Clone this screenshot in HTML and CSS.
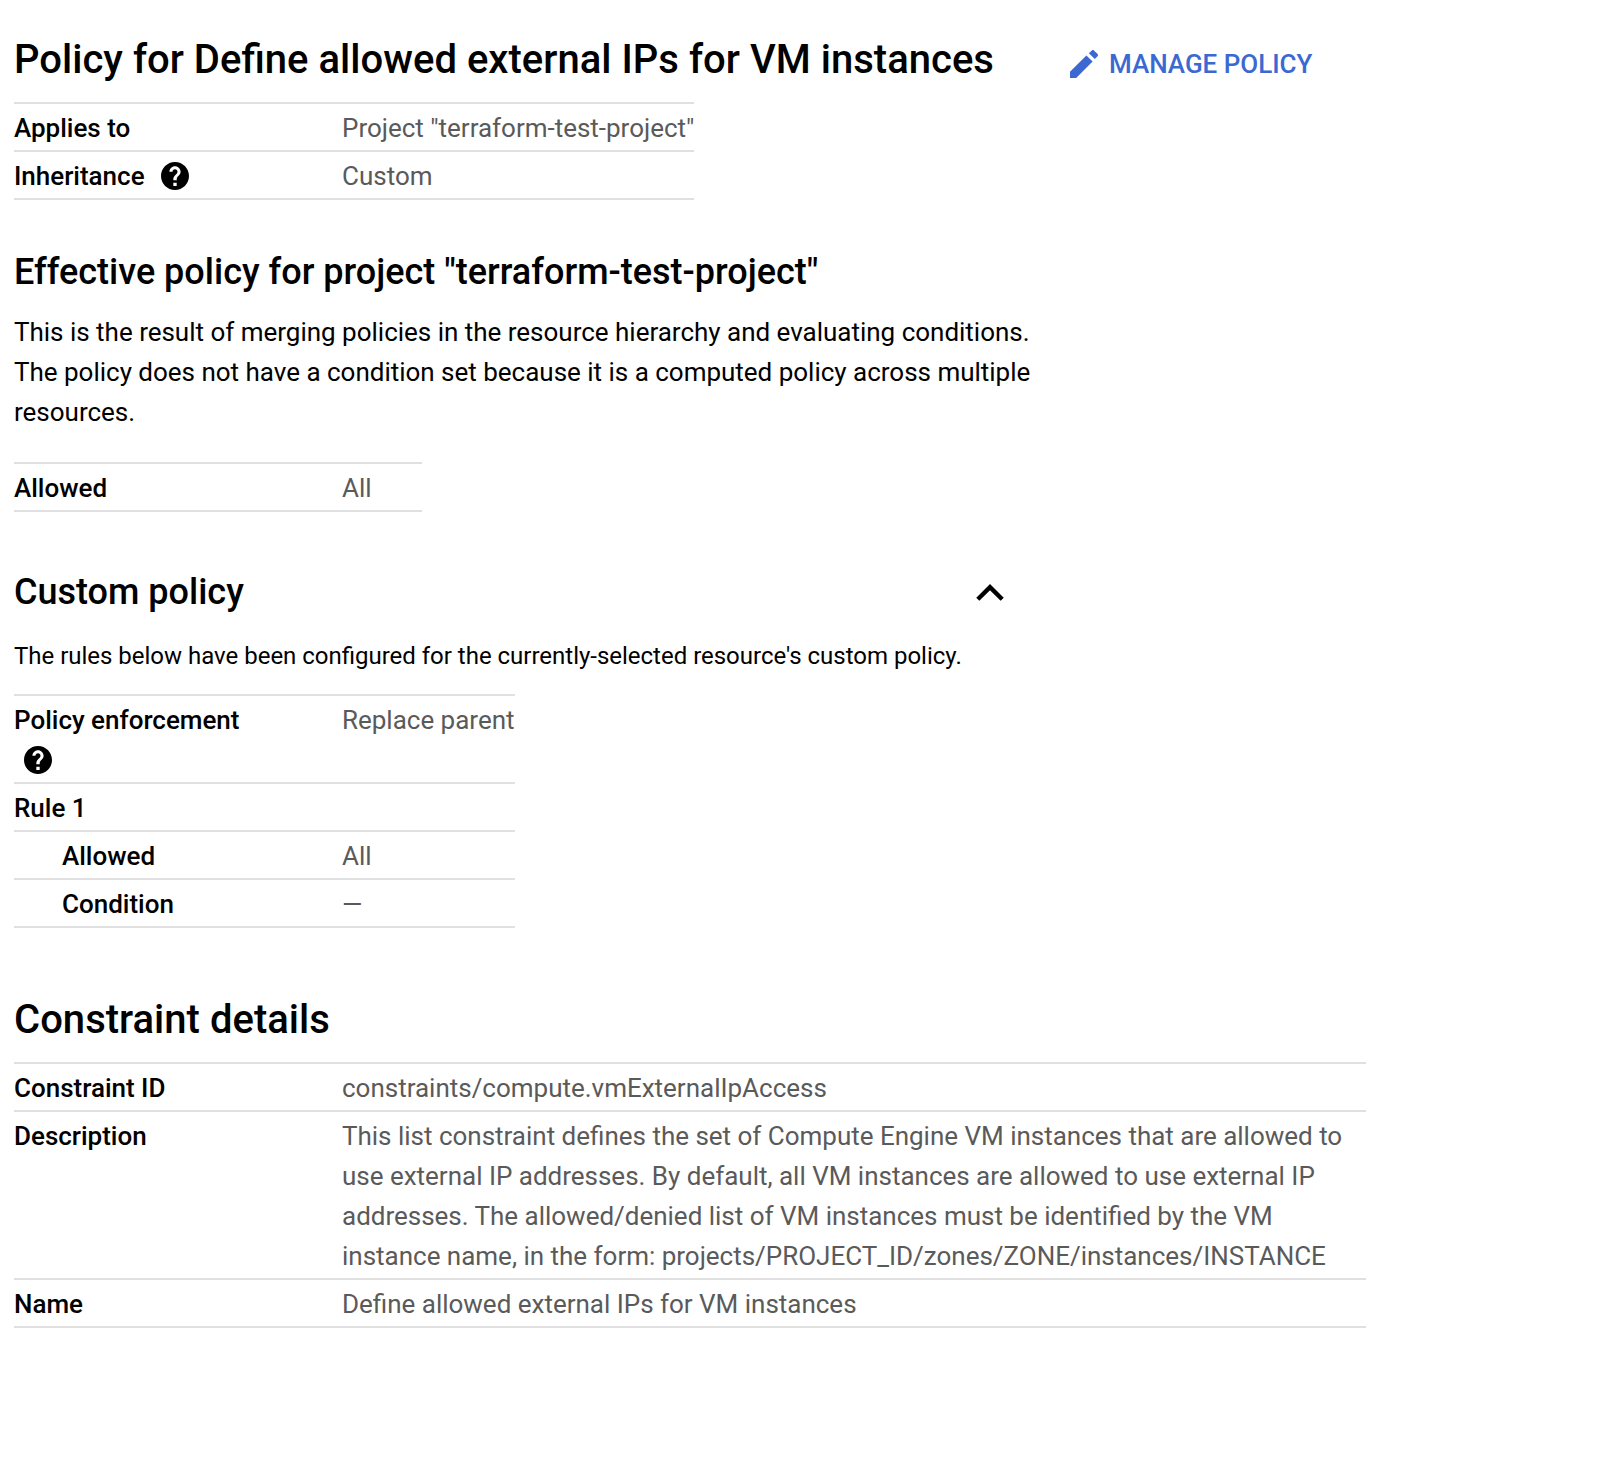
FILE: index.html
```html
<!DOCTYPE html>
<html lang="en">
<head>
<meta charset="utf-8">
<title>Organization policy details</title>
<link rel="stylesheet" href="styles.css">
</head>
<body>
<svg class="sprite" aria-hidden="true">
  <symbol id="help" viewBox="2 2 20 20">
    <path d="M12 2C6.480 2 2 6.480 2 12s4.480 10 10 10 10-4.480 10-10S17.520 2 12 2zm1.200 17.200h-2.400v-2.400h2.400v2.400zm1.870-7.950l-.9.920C13.450 12.900 13.200 13.500 13.200 15h-2.400v-.5c0-1.100.45-2.100 1.170-2.830l1.240-1.260c.37-.36.59-.86.59-1.410 0-1-.8-1.800-1.800-1.800s-1.800.8-1.800 1.800H8c0-2.210 1.790-4 4-4s4 1.790 4 4c0 .88-.36 1.680-.93 2.250z"/>
  </symbol>
</svg>
<main class="page">
  <header class="page-header">
    <h1 class="title">Policy for Define allowed external IPs for VM instances</h1>
    <a class="action">
      <svg class="action-icon" viewBox="0 0 18 18"><path d="M2 12.900L10.200 4.700 13.300 7.800 5.100 16H2zM15.776 5.103L14.400 6.480 11.450 3.600l1.450-1.380c.3-.3.783-.3 1.083 0l1.800 1.800c.3.3.3.784 0 1.083z"/></svg>
      <span>MANAGE POLICY</span>
    </a>
  </header>

  <dl class="details">
    <div class="row"><dt>Applies to</dt><dd>Project "terraform-test-project"</dd></div>
    <div class="row"><dt>Inheritance <svg class="help"><use href="#help"/></svg></dt><dd>Custom</dd></div>
  </dl>

  <section class="effective">
    <h2 class="subtitle">Effective policy for project "terraform-test-project"</h2>
    <p class="text">This is the result of merging policies in the resource hierarchy and evaluating conditions. The policy does not have a condition set because it is a computed policy across multiple resources.</p>
    <dl class="details">
      <div class="row"><dt>Allowed</dt><dd>All</dd></div>
    </dl>
  </section>

  <section class="custom">
    <div class="custom-header">
      <h2 class="subtitle">Custom policy</h2>
      <svg class="chevron" viewBox="0 0 28 18"><path d="M1.800 16.200L14 4.100 26.200 16.200"/></svg>
    </div>
    <p class="note">The rules below have been configured for the currently-selected resource's custom policy.</p>
    <dl class="details">
      <div class="row"><dt>Policy enforcement <svg class="help"><use href="#help"/></svg></dt><dd>Replace parent</dd></div>
      <div class="row"><dt>Rule 1</dt><dd></dd></div>
      <div class="row nested"><dt>Allowed</dt><dd>All</dd></div>
      <div class="row nested"><dt>Condition</dt><dd>—</dd></div>
    </dl>
  </section>

  <section class="constraint">
    <h1 class="title">Constraint details</h1>
    <dl class="details wide">
      <div class="row"><dt>Constraint ID</dt><dd>constraints/compute.vmExternalIpAccess</dd></div>
      <div class="row"><dt>Description</dt><dd>This list constraint defines the set of Compute Engine VM instances that are allowed to use external IP addresses. By default, all VM instances are allowed to use external IP addresses. The allowed/denied list of VM instances must be identified by the VM instance name, in the form: projects/PROJECT_ID/zones/ZONE/instances/INSTANCE</dd></div>
      <div class="row"><dt>Name</dt><dd>Define allowed external IPs for VM instances</dd></div>
    </dl>
  </section>
</main>
</body>
</html>
```
FILE: styles.css
```css
* { box-sizing: border-box; margin: 0; padding: 0; }

body {
  background: #fff;
  color: #000;
  font: 400 26px/40px Roboto, sans-serif;
  font-feature-settings: "liga" 1;
  letter-spacing: -0.012px;
}

.sprite { display: block; width: 0; height: 0; }

.page { padding: 35px 0 0 14px; }

.page-header {
  display: flex;
  align-items: flex-start;
  height: 67px;
}

.title {
  font-size: 40px;
  font-weight: 500;
  line-height: 50px;
  letter-spacing: 0.018px;
  white-space: nowrap;
}
.page-header .title { width: 1052px; }

.action {
  display: flex;
  align-items: center;
  gap: 7px;
  margin-top: 9px;
  color: #3b69d1;
  font-weight: 500;
  white-space: nowrap;
}
.action-icon { width: 36px; height: 36px; fill: currentColor; }

.details {
  width: fit-content;
  min-width: 408px;
  border-top: 2px solid #e0e0e0;
}
.details.wide { width: 1352px; }

.row {
  display: flex;
  padding: 4px 0 2px;
  border-bottom: 2px solid #e0e0e0;
}
.row dt { flex: none; width: 328px; padding-right: 80px; font-weight: 500; }
.row dd { color: #5a5a5a; }
.nested dt { padding-left: 48px; }

.help { width: 28px; height: 28px; margin: 0 10px; vertical-align: -5px; }

.effective { margin-top: 48px; }
.subtitle { font-size: 36px; font-weight: 500; line-height: 48px; letter-spacing: 0; }
.text { width: 1040px; margin-top: 16px; }
.effective .details { margin-top: 30px; }

.custom { margin-top: 56px; }
.custom-header {
  display: flex;
  align-items: center;
  justify-content: space-between;
  width: 990px;
}
.chevron { width: 28px; height: 18px; fill: none; stroke: #000; stroke-width: 4.4; }
.note { margin-top: 20px; font-size: 24px; }
.custom .details { margin-top: 18px; }

.constraint { margin-top: 67px; }
.constraint .details { margin-top: 17px; }
```
